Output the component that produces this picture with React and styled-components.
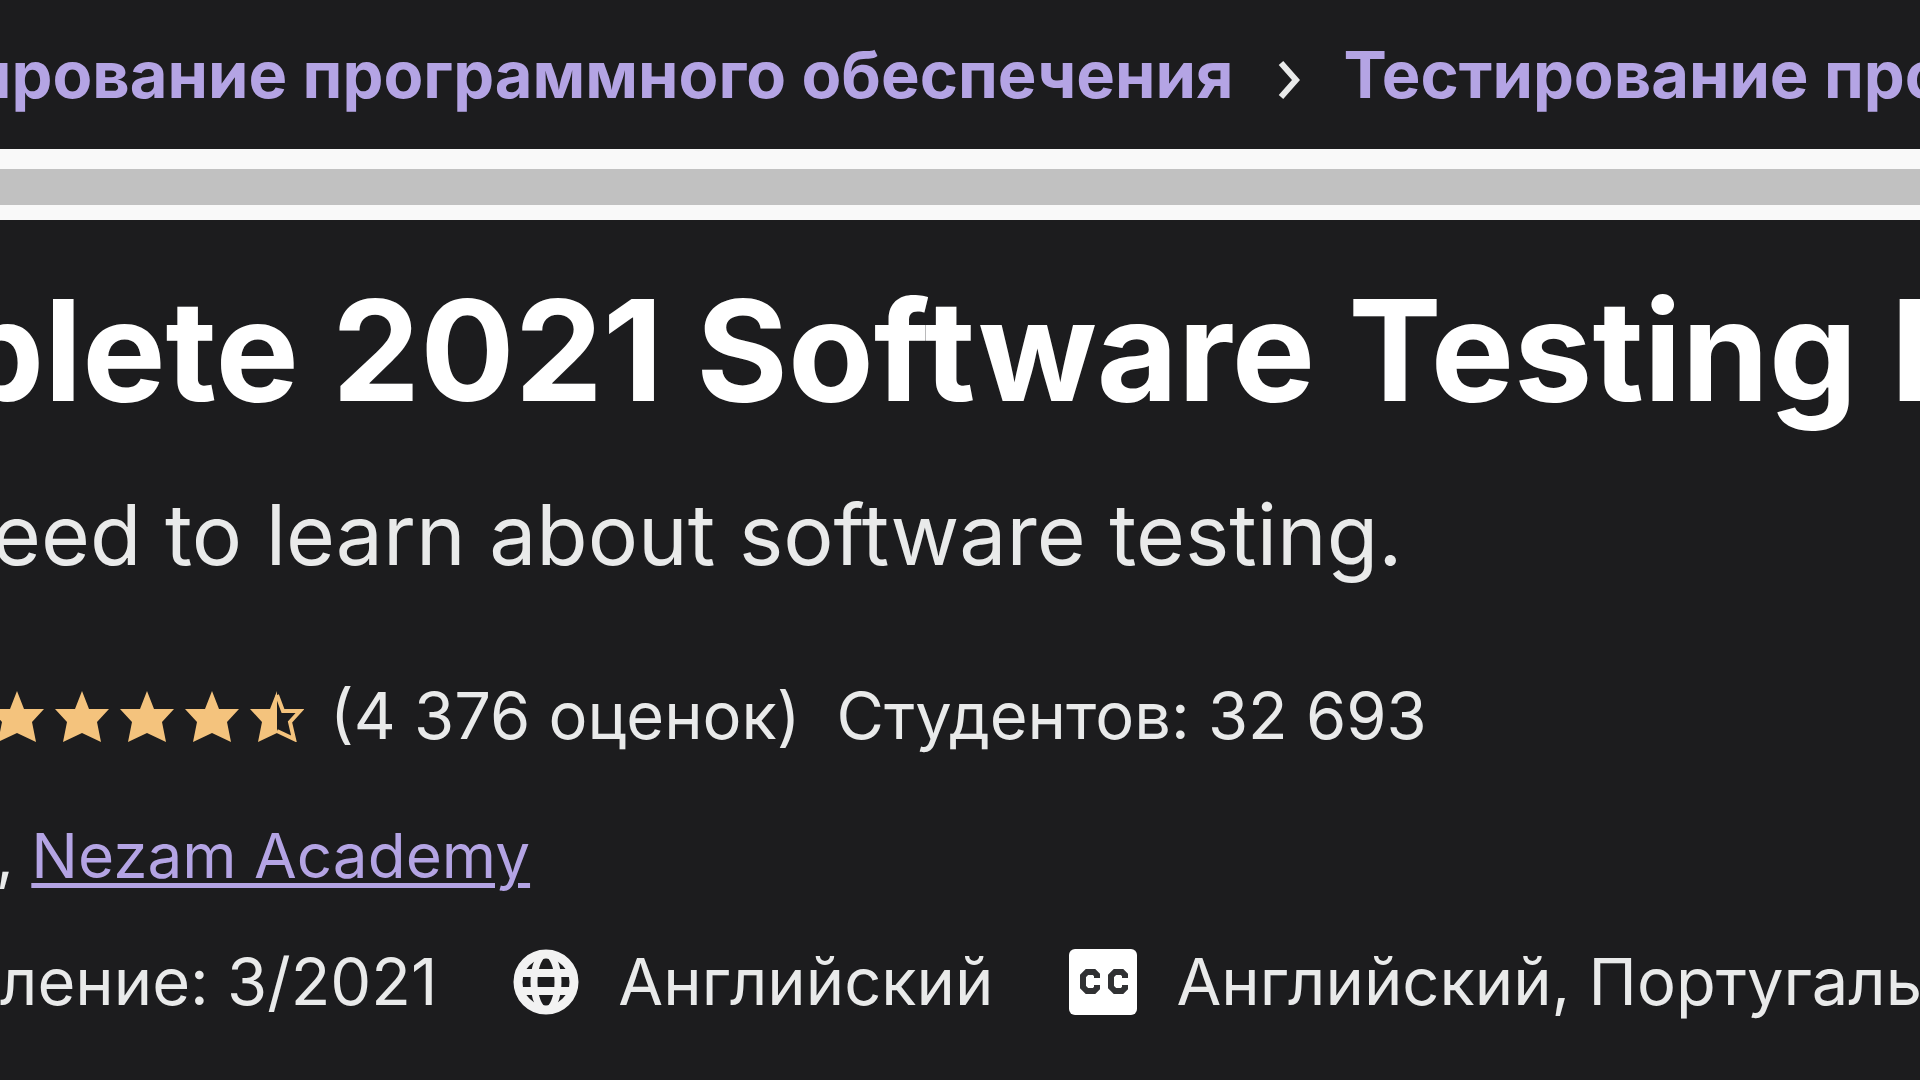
import React from 'react';
import styled, { createGlobalStyle } from 'styled-components';

const GlobalStyle = createGlobalStyle`
  body {
    margin: 0;
    background: #1c1c1e;
  }
`;

const Page = styled.div`
  min-height: 100vh;
  overflow: hidden;
  background: #1c1c1e;
  color: #e9eaea;
  font-family: 'Inter', 'Liberation Sans', sans-serif;
  font-size: 65px;
  line-height: 80px;
  white-space: nowrap;
`;

const Breadcrumbs = styled.nav`
  display: flex;
  align-items: center;
  margin-left: -29px;
  padding: 35px 0 34px;
`;

const Crumb = styled.a`
  flex-shrink: 0;
  color: #b4a4e4;
  font-weight: 700;
  text-decoration: none;
`;

const ChevronIcon = styled.svg`
  flex-shrink: 0;
  width: 22px;
  height: 40px;
  margin: 10px 44px 0;
`;

const ScrollBar = styled.div`
  padding: 20px 0 15px;
  background: #f9f9f9;
`;

const ScrollThumb = styled.div`
  height: 36px;
  background: #c1c1c1;
`;

const Title = styled.h1`
  margin: 40px 0 0 -44px;
  color: #fff;
  font-size: 140px;
  font-weight: 700;
  line-height: 180px;
`;

const Headline = styled.p`
  margin: 42px 0 0 -8px;
  font-size: 84px;
  line-height: 106px;
`;

const Rating = styled.div`
  display: flex;
  align-items: center;
  margin: 88px 0 0 -10px;
`;

const Stars = styled.div`
  display: flex;
  gap: 11px;
  margin-right: 26px;
`;

const StarIcon = styled.svg`
  width: 54px;
  height: 51px;
`;

const Students = styled.span`
  margin-left: 36px;
`;

const Authors = styled.div`
  margin: 60px 0 0 -4px;
  font-size: 62px;
`;

const AuthorLink = styled.a`
  color: #b4a4e4;
  text-decoration: underline;
  text-decoration-thickness: 5px;
  text-underline-offset: 5px;
`;

const Meta = styled.div`
  display: flex;
  align-items: center;
  gap: 76px;
  margin-top: 46px;
`;

const MetaItem = styled.div`
  display: flex;
  flex-shrink: 0;
  align-items: center;
  gap: 39px;
`;

const MetaIcon = styled.svg`
  width: ${(props) => props.$width}px;
  height: 66px;
`;

const STAR_PATH = 'M27 0L34 18H54L42 31L46 51L27 42L8 51L12 31L0 18H20Z';

const Star = ({ half }) => (
  <StarIcon viewBox="0 0 54 51" aria-hidden="true">
    {half ? (
      <>
        <path d="M27 0V42L8 51L12 31L0 18H20Z" fill="#f4c37d" />
        <path
          d="M27 4L33 20H50L40 31L44 48L27 40"
          fill="none"
          stroke="#f4c37d"
          strokeWidth="4"
        />
      </>
    ) : (
      <path d={STAR_PATH} fill="#f4c37d" />
    )}
  </StarIcon>
);

const Chevron = () => (
  <ChevronIcon viewBox="0 0 22 40" aria-hidden="true">
    <path d="M3 3L18 20L3 37" fill="none" stroke="#e9eaea" strokeWidth="6" />
  </ChevronIcon>
);

const GlobeIcon = () => (
  <MetaIcon $width={66} viewBox="0 0 66 66" aria-hidden="true">
    <g fill="none" stroke="#f2f2f2">
      <circle cx="33" cy="33" r="28" strokeWidth="9" />
      <ellipse cx="33" cy="33" rx="12" ry="28" strokeWidth="7" />
      <path d="M7 24H59M7 42H59" strokeWidth="8" />
    </g>
  </MetaIcon>
);

const CaptionsIcon = () => (
  <MetaIcon $width={68} viewBox="0 0 68 66" aria-hidden="true">
    <rect width="68" height="66" rx="6" fill="#fff" />
    <g fill="none" stroke="#303133" strokeWidth="6">
      <path d="M28 29V26L25 23H18L14 27V38L18 42H25L28 39V36" />
      <path d="M56 29V26L53 23H46L42 27V38L46 42H53L56 39V36" />
    </g>
  </MetaIcon>
);

const App = () => {
  return (
    <>
      <GlobalStyle />
      <Page>
        <Breadcrumbs>
          <Crumb href="#">ирование программного обеспечения</Crumb>
          <Chevron />
          <Crumb href="#">Тестирование про</Crumb>
        </Breadcrumbs>
        <ScrollBar>
          <ScrollThumb />
        </ScrollBar>
        <Title>plete 2021 Software Testing B</Title>
        <Headline>eed to learn about software testing.</Headline>
        <Rating>
          <Stars>
            <Star />
            <Star />
            <Star />
            <Star />
            <Star half />
          </Stars>
          <span>(4 376 оценок)</span>
          <Students>Студентов: 32 693</Students>
        </Rating>
        <Authors>
          , <AuthorLink href="#">Nezam Academy</AuthorLink>
        </Authors>
        <Meta>
          <MetaItem>ление: 3/2021</MetaItem>
          <MetaItem>
            <GlobeIcon />
            Английский
          </MetaItem>
          <MetaItem>
            <CaptionsIcon />
            Английский, Португаль
          </MetaItem>
        </Meta>
      </Page>
    </>
  );
};

export default App;
